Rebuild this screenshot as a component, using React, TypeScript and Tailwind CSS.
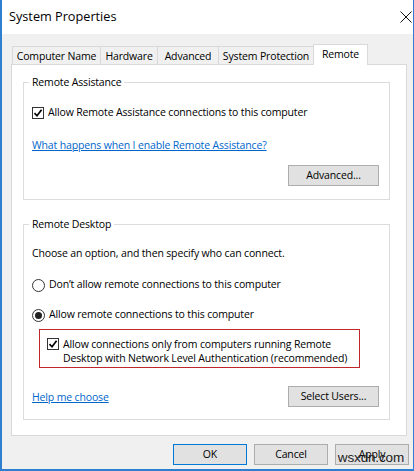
import React from 'react';

const font = { fontFamily: '"Open Sans", "Noto Sans", sans-serif' };

function CheckBox({ checked }: { checked: boolean }) {
  return (
    <span className="flex h-[12px] w-[12px] shrink-0 items-center justify-center border border-[#333333] bg-white">
      {checked && (
        <svg width="10" height="10" viewBox="0 0 10 10" aria-hidden="true">
          <path d="M1.5 5.2 L4 7.8 L8.6 1.8" fill="none" stroke="#000" strokeWidth="1.7" />
        </svg>
      )}
    </span>
  );
}

function Radio({ checked }: { checked: boolean }) {
  return (
    <span className="flex h-[13px] w-[13px] shrink-0 items-center justify-center rounded-full border border-[#333333] bg-white">
      {checked && <span className="h-[7px] w-[7px] rounded-full bg-[#222222]" />}
    </span>
  );
}

function Button({ label, primary }: { label: string; primary?: boolean }) {
  return (
    <button
      type="button"
      className={
        primary
          ? 'flex h-[21px] w-[74px] items-center justify-center whitespace-nowrap border border-[#0078d7] bg-[#e1e1e1] text-[10.5px] text-black'
          : 'flex h-[21px] w-[74px] items-center justify-center whitespace-nowrap border border-[#adadad] bg-[#e1e1e1] text-[10.5px] text-black'
      }
    >
      {label}
    </button>
  );
}

function WideButton({ label }: { label: string }) {
  return (
    <button
      type="button"
      className="flex h-[21px] w-[91px] items-center justify-center whitespace-nowrap border border-[#adadad] bg-[#e1e1e1] text-[10.5px] text-black"
    >
      {label}
    </button>
  );
}

function GroupBox({ title, children }: { title: string; children: React.ReactNode }) {
  return (
    <div className="relative ml-[11px] w-[367px] border border-[#dcdcdc] pl-[8px] pr-[10px]">
      <span className="absolute -top-[9px] left-[5px] bg-white px-[3px] leading-[16px]">{title}</span>
      {children}
    </div>
  );
}

const tabs = [
  { label: 'Computer Name', width: 'w-[89px]' },
  { label: 'Hardware', width: 'w-[58px]' },
  { label: 'Advanced', width: 'w-[62px]' },
  { label: 'System Protection', width: 'w-[96px]' },
];

export default function App() {
  return (
    <div
      className="relative h-[471px] w-[414px] whitespace-nowrap border-b-2 border-l-2 border-r border-[#2f7fd0] bg-[#f0f0f0] text-[10.5px] tracking-[-0.15px] text-black"
      style={font}
    >
      {/* title bar */}
      <div className="flex h-[34px] items-center justify-between bg-white pl-[7px] pr-[1px]">
        <span className="text-[12.7px] tracking-normal">System Properties</span>
        <svg width="12" height="12" viewBox="0 0 12 12" aria-hidden="true">
          <path d="M0.5 0.5 L11.5 11.5 M11.5 0.5 L0.5 11.5" stroke="#111" strokeWidth="1" />
        </svg>
      </div>

      <div className="pl-[9px] pt-[10px]">
        {/* tabs */}
        <div className="ml-px flex h-[20px] items-end">
          {tabs.map((tab, i) => (
            <div
              key={tab.label}
              className={`flex h-[18px] ${tab.width} ${i > 0 ? '-ml-px' : ''} items-center justify-center border border-b-0 border-[#d9d9d9] bg-[#f0f0f0] pt-[2px]`}
            >
              {tab.label}
            </div>
          ))}
          <div className="relative z-10 -mb-px -ml-px flex h-[21px] w-[55px] items-center justify-center border border-b-0 border-[#d9d9d9] bg-white pb-px">
            Remote
          </div>
        </div>

        {/* tab page */}
        <div className="h-[372px] w-[396px] border border-[#d9d9d9] bg-white pt-[17px]">
          <GroupBox title="Remote Assistance">
            <div className="mt-[22px] flex h-[16px] items-center gap-[4px]">
              <CheckBox checked />
              <span>Allow Remote Assistance connections to this computer</span>
            </div>
            <div className="mt-[17px] flex h-[16px] items-center">
              <a href="#" className="text-[#0066cc] underline">
                What happens when I enable Remote Assistance?
              </a>
            </div>
            <div className="mb-[13px] mt-[11px] flex justify-end">
              <WideButton label="Advanced..." />
            </div>
          </GroupBox>

          <div className="h-[24px]" />

          <GroupBox title="Remote Desktop">
            <div className="mt-[21px] flex h-[16px] items-center">
              Choose an option, and then specify who can connect.
            </div>
            <div className="mt-[15px] flex h-[16px] items-center gap-[4px]">
              <Radio checked={false} />
              <span>Don&#8217;t allow remote connections to this computer</span>
            </div>
            <div className="mt-[14px] flex h-[16px] items-center gap-[4px]">
              <Radio checked />
              <span>Allow remote connections to this computer</span>
            </div>
            <div className="ml-[7px] mt-[6px] flex w-[321px] gap-[4px] border border-[#c0272d] pb-[2px] pl-[7px] pt-[7px]">
              <div className="pt-px">
                <CheckBox checked />
              </div>
              <span className="leading-[14px]">
                Allow connections only from computers running Remote
                <br />
                Desktop with Network Level Authentication (recommended)
              </span>
            </div>
            <div className="mb-[12px] mt-[18px] flex items-center justify-between">
              <a href="#" className="pt-[2px] text-[#0066cc] underline">
                Help me choose
              </a>
              <WideButton label="Select Users..." />
            </div>
          </GroupBox>
        </div>

        {/* dialog buttons */}
        <div className="mr-[4px] mt-[8px] flex justify-end gap-[7px]">
          <Button label="OK" primary />
          <Button label="Cancel" />
          <Button label="Apply" />
        </div>
      </div>

      <span
        className="absolute bottom-[1px] right-[9px] text-[13.5px] text-[#222222]"
        style={{ fontFamily: '"Liberation Sans", sans-serif' }}
      >
        wsxdn.com
      </span>
    </div>
  );
}
